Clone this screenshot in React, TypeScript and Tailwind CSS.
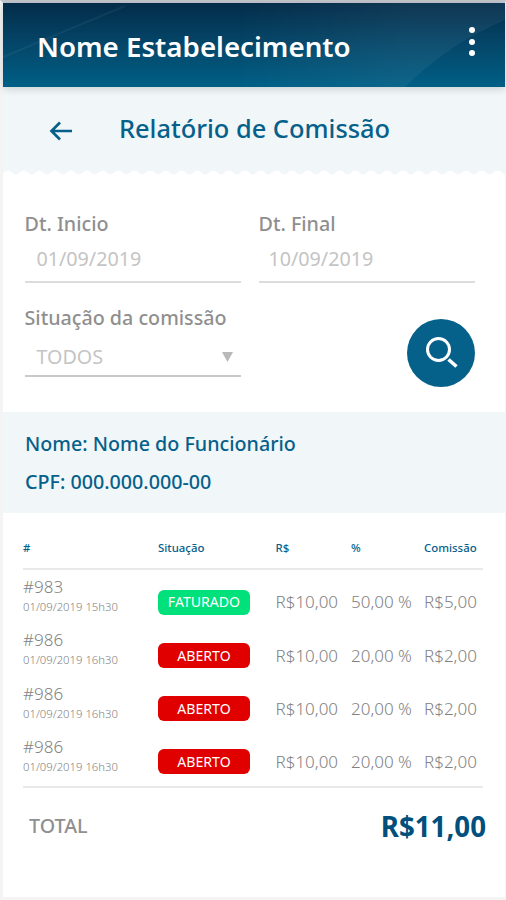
import React from "react";

type Status = "FATURADO" | "ABERTO";

type Entry = {
  id: string;
  date: string;
  status: Status;
  amount: string;
  percent: string;
  commission: string;
};

const ENTRIES: Entry[] = [
  { id: "#983", date: "01/09/2019 15h30", status: "FATURADO", amount: "R$10,00", percent: "50,00 %", commission: "R$5,00" },
  { id: "#986", date: "01/09/2019 16h30", status: "ABERTO", amount: "R$10,00", percent: "20,00 %", commission: "R$2,00" },
  { id: "#986", date: "01/09/2019 16h30", status: "ABERTO", amount: "R$10,00", percent: "20,00 %", commission: "R$2,00" },
  { id: "#986", date: "01/09/2019 16h30", status: "ABERTO", amount: "R$10,00", percent: "20,00 %", commission: "R$2,00" },
];

const STATUS_STYLE: Record<Status, string> = {
  FATURADO: "bg-[#00e17b]",
  ABERTO: "bg-[#e00000]",
};

const COLUMNS = "grid grid-cols-[135px_117.500px_75.500px_73px_1fr]";

function AppBar() {
  return (
    <header className="relative z-10 flex h-[84px] items-center justify-between bg-linear-to-b from-[#032c49] via-[#04476a] to-[#005f86] pl-[34px] pr-[30px] shadow-[0_2px_8px_rgba(0,0,0,0.16)]">
      {/* faint diagonal shine */}
      <svg className="absolute inset-0 h-full w-full" viewBox="0 0 502 84" preserveAspectRatio="none" aria-hidden="true">
        <defs>
          <linearGradient id="shine" x1="0" y1="0" x2="1" y2="0">
            <stop offset="0" stopColor="#fff" stopOpacity="0" />
            <stop offset="0.65" stopColor="#fff" stopOpacity="0.05" />
            <stop offset="1" stopColor="#fff" stopOpacity="0.05" />
          </linearGradient>
        </defs>
        <path d="M230 0H502V17C465 33 435 52 402 84H230Z" fill="url(#shine)" />
        <path d="M0 54L122 3" stroke="#fff" strokeOpacity="0.05" strokeWidth="2" />
      </svg>
      <h1 className="relative pt-px text-[27.7px] leading-9 font-semibold text-white">Nome Estabelecimento</h1>
      <button type="button" aria-label="Menu" className="relative mb-[7px] flex flex-col gap-[5.5px]">
        <span className="size-1.5 rounded-full bg-white" />
        <span className="size-1.5 rounded-full bg-white" />
        <span className="size-1.5 rounded-full bg-white" />
      </button>
    </header>
  );
}

function TitleBar() {
  return (
    <div className="h-[89px] bg-[#f1f6f9]">
      <div className="flex h-[83px] items-center pl-[46px]">
        <button type="button" aria-label="Voltar" className="mt-1">
          <svg width="24" height="20" viewBox="0 0 24 20" fill="none" stroke="#05608a" strokeWidth="2.7">
            <path d="M11 1.5L2.5 10L11 18.5M2.5 10H23" />
          </svg>
        </button>
        <h2 className="-mt-px ml-[46px] text-[25.4px] leading-9 font-medium text-[#05608a]">Relatório de Comissão</h2>
      </div>
      <svg className="block h-1.5 w-full" aria-hidden="true">
        <defs>
          <pattern id="scallop" x="-3" width="15.8" height="6" patternUnits="userSpaceOnUse">
            <path d="M0 6V4.500C3 4.500 4.500 0.500 7.900 0.500S12.800 4.500 15.800 4.500V6Z" fill="#fff" />
          </pattern>
        </defs>
        <rect width="100%" height="6" fill="url(#scallop)" />
      </svg>
    </div>
  );
}

function Field({ label, value, inset }: { label: string; value: string; inset: string }) {
  return (
    <label className="flex w-[216px] flex-col border-b-2 border-[#dcdcdc]">
      <span className="text-[19.7px] leading-7 font-medium text-[#8f8f8f]">{label}</span>
      <span className={`mt-[7px] mb-2 text-[19.7px] leading-7 text-[#c4c4c4] ${inset}`}>{value}</span>
    </label>
  );
}

function Filters() {
  return (
    <section className="h-[236px] px-[21.5px] pt-[34px]">
      <div className="flex gap-[18px]">
        <Field label="Dt. Inicio" value="01/09/2019" inset="pl-3" />
        <Field label="Dt. Final" value="10/09/2019" inset="pl-2.5" />
      </div>
      <div className="mt-[21px] flex items-start justify-between pr-[9px]">
        <div className="w-[216px] border-b-2 border-[#c9c9c9]">
          <div className="text-[19.7px] leading-7 font-medium text-[#8f8f8f]">Situação da comissão</div>
          <div className="mt-[11px] mb-[4px] flex items-center justify-between pl-3 pr-2">
            <span className="text-[19.7px] leading-7 text-[#c4c4c4]">TODOS</span>
            <svg width="11" height="10" viewBox="0 0 11 10">
              <path d="M0 0H11L5.500 10Z" fill="#b9b9b9" />
            </svg>
          </div>
        </div>
        <button type="button" aria-label="Buscar" className="mt-[15px] flex size-[68px] items-center justify-center rounded-full bg-[#05608a]">
          <svg width="68" height="68" viewBox="0 0 68 68" fill="none" stroke="#fff">
            <circle cx="31.500" cy="30.500" r="11" strokeWidth="3" />
            <path d="M41.500 40.500L49.500 47.500" strokeWidth="3.600" />
          </svg>
        </button>
      </div>
    </section>
  );
}

function Employee() {
  return (
    <section className="flex h-[101px] flex-col gap-2.5 bg-[#f1f6f9] pt-[18px] pl-[22px] text-[19.7px] leading-7 font-medium text-[#05608a]">
      <p>Nome: Nome do Funcionário</p>
      <p>CPF: 000.000.000-00</p>
    </section>
  );
}

function CommissionTable() {
  return (
    <section className="ml-5 w-[460px]">
      <div className={`${COLUMNS} h-[57px] items-center border-b-2 border-[#e9e9e9] pt-[14px] text-[11.4px] leading-4 font-medium text-[#05608a]`}>
        <span>#</span>
        <span>Situação</span>
        <span>R$</span>
        <span>%</span>
        <span>Comissão</span>
      </div>
      <div className="h-[218px] border-b-2 border-[#e9e9e9] pt-[5px]">
        {ENTRIES.map((e, i) => (
          <div key={i} className={`${COLUMNS} h-[53.3px] items-center text-[17px] font-light text-[#828282]`}>
            <div className="pb-3.5">
              <div className="leading-6">{e.id}</div>
              <div className="text-[11.3px] leading-4">{e.date}</div>
            </div>
            <span className={`flex h-[25px] w-[92px] items-center justify-center rounded-md text-[14.1px] font-normal text-white ${STATUS_STYLE[e.status]}`}>
              {e.status}
            </span>
            <span className="whitespace-nowrap">{e.amount}</span>
            <span className="whitespace-nowrap">{e.percent}</span>
            <span className="whitespace-nowrap">{e.commission}</span>
          </div>
        ))}
      </div>
      <div className="-mr-[3px] flex items-center justify-between pt-[18px] pl-1.5">
        <span className="text-[19.7px] font-medium text-[#8f8f8f]">TOTAL</span>
        <span className="text-[27.7px] leading-10 font-bold text-[#004f7c]">R$11,00</span>
      </div>
    </section>
  );
}

export default function App() {
  return (
    <div className="h-[900px] w-[506px] border-t-3 border-r border-b-3 border-l-3 border-[#f4f4f4] border-t-[#c3c7cd] bg-white font-['Noto_Sans',sans-serif]">
      <AppBar />
      <TitleBar />
      <Filters />
      <Employee />
      <CommissionTable />
    </div>
  );
}
